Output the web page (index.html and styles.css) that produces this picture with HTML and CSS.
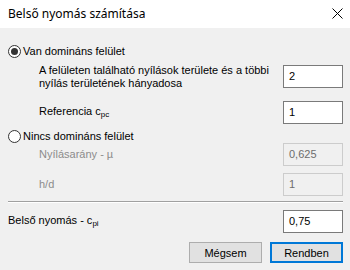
FILE: index.html
```html
<!DOCTYPE html>
<html lang="hu">
<head>
    <meta charset="UTF-8">
    <title>Belső nyomás számítása</title>
    <link rel="stylesheet" href="styles.css">
</head>
<body>
    <div class="window">
        <div class="titlebar">
            <span class="title">Belső nyomás számítása</span>
            <svg class="close" width="11" height="11" viewBox="0 0 11 11">
                <path d="M0.5 0.5 L10.5 10.5 M10.5 0.5 L0.5 10.5" stroke="#000" stroke-width="1" fill="none"/>
            </svg>
        </div>

        <div class="content">
            <label class="radio-row first">
                <span class="radio checked"></span>
                <span>Van domináns felület</span>
            </label>

            <div class="field-row tall">
                <span class="label">A felületen található nyílások területe és a többi<br>nyílás területének hányadosa</span>
                <div class="input">2</div>
            </div>
            <div class="field-row gap13">
                <span class="label">Referencia c<sub>pc</sub></span>
                <div class="input">1</div>
            </div>

            <label class="radio-row second">
                <span class="radio"></span>
                <span>Nincs domináns felület</span>
            </label>

            <div class="field-row disabled">
                <span class="label">Nyílásarány - µ</span>
                <div class="input">0,625</div>
            </div>
            <div class="field-row disabled gap7">
                <span class="label">h/d</span>
                <div class="input">1</div>
            </div>

            <div class="separator"></div>

            <div class="field-row result">
                <span class="label">Belső nyomás - c<sub>pi</sub></span>
                <div class="input">0,75</div>
            </div>

            <div class="buttons">
                <button class="btn">Mégsem</button>
                <button class="btn default">Rendben</button>
            </div>
        </div>
    </div>
</body>
</html>
```

FILE: styles.css
```css
body {
    margin: 0;
    width: 350px;
    height: 270px;
    background: #f0f0f0;
    font-family: 'Liberation Sans', Arial, sans-serif;
    font-size: 11px;
    color: #000;
    overflow: hidden;
}

.titlebar {
    height: 28px;
    background: #ffffff;
    display: flex;
    align-items: center;
    justify-content: space-between;
    padding: 0 7px 0 8px;
}

.title {
    font-family: 'Noto Sans', sans-serif;
    font-size: 12px;
    margin-top: -2px;
}

.close {
    margin-top: -2px;
}

.content {
    padding: 0 7px 0 8px;
}

.radio-row {
    display: flex;
    align-items: center;
    gap: 2px;
    height: 14px;
}

.radio-row.first {
    margin-top: 16px;
}

.radio-row.second {
    margin-top: 5px;
}

.radio {
    width: 11px;
    height: 11px;
    border: 1px solid #333;
    border-radius: 50%;
    background: #fff;
    position: relative;
}

.radio.checked::after {
    content: "";
    position: absolute;
    left: 2px;
    top: 2px;
    width: 7px;
    height: 7px;
    border-radius: 50%;
    background: #333;
}

.field-row {
    display: flex;
    align-items: center;
    justify-content: space-between;
    height: 23px;
    padding-left: 31px;
}

.field-row.tall {
    margin-top: 7px;
}

.field-row.gap13 {
    margin-top: 13px;
}

.field-row.gap7 {
    margin-top: 7px;
}

.label {
    line-height: 13px;
}

.label sub {
    font-size: 8px;
    vertical-align: -2px;
}

.input {
    box-sizing: border-box;
    width: 60px;
    height: 23px;
    border: 1px solid #7a7a7a;
    background: #fff;
    padding: 4px 0 0 5px;
    line-height: 13px;
}

.disabled .label {
    color: #8c8c8c;
}

.disabled .input {
    border-color: #cccccc;
    background: #f0f0f0;
    color: #6d6d6d;
}

.separator {
    margin-top: 5px;
    height: 0;
    border-top: 1px solid #a0a0a0;
    border-bottom: 1px solid #ffffff;
}

.field-row.result {
    padding-left: 0;
    margin-top: 7px;
}

.buttons {
    display: flex;
    justify-content: flex-end;
    gap: 8px;
    margin-top: 9px;
}

.btn {
    box-sizing: border-box;
    width: 73px;
    height: 21px;
    background: #e1e1e1;
    border: 1px solid #adadad;
    font-family: 'Liberation Sans', Arial, sans-serif;
    font-size: 11px;
    color: #000;
    padding: 0;
}

.btn.default {
    border: 2px solid #0078d7;
}
```
